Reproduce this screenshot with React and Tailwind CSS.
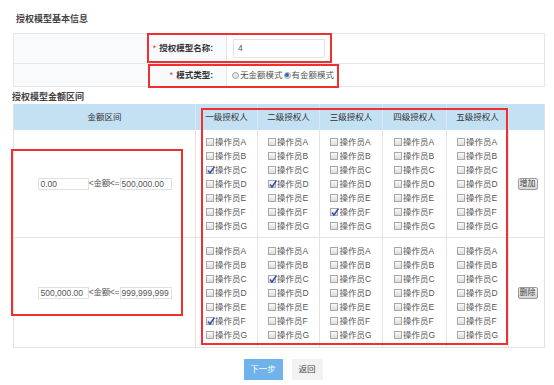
import React from "react";

// 授权人级别与操作员
const levels = ["一级授权人", "二级授权人", "三级授权人", "四级授权人", "五级授权人"];
const operators = ["A", "B", "C", "D", "E", "F", "G"];

// 每个区间中各级别已勾选的操作员
const ranges = [
  { from: "0.00", to: "500,000.00", action: "增加", checked: ["C", "D", "F", "", ""], h: "h-[108px]" },
  { from: "500,000.00", to: "999,999,999", action: "删除", checked: ["F", "C", "", "", ""], h: "h-[109px]" },
];

const Checkbox = ({ checked }) => (
  <span className="relative inline-block w-[8px] h-[8px] mr-[1px] border border-[#a8a8a8] bg-gradient-to-b from-[#fafafa] to-[#dcdcdc] align-[-1px]">
    {checked && (
      <svg viewBox="0 0 10 10" className="absolute -left-[1px] -top-[2px] w-[10px] h-[10px]">
        <path d="M2 5.5 L4 8 L8.5 1.5" fill="none" stroke="#2a4fb0" strokeWidth="1.4" />
      </svg>
    )}
  </span>
);

const Radio = ({ checked }) => (
  <span className="inline-flex items-center justify-center w-[7px] h-[7px] rounded-full border border-[#a0a0a0] bg-[#e8e8e8] mr-[1px]">
    {checked && <span className="w-[4px] h-[4px] rounded-full bg-[#1f6fc0]" />}
  </span>
);

const Mark = ({ className }) => (
  <div className={`absolute border-2 border-[#f03030] pointer-events-none ${className}`} />
);

export default function App() {
  return (
    <div className="relative w-[554px] h-[385px] bg-white text-[8.5px] text-[#333] font-['Liberation_Sans','Noto_Sans_CJK_SC',sans-serif] pl-[13px] pr-[9px] pt-[12px]">
      {/* 基本信息 */}
      <div className="h-[14px] leading-[14px] pl-[3px] font-bold text-[9px] text-[#444]">授权模型基本信息</div>
      <div className="mt-[7px] border border-[#e6e6e6]">
        <div className="flex h-[30px] border-b border-[#e6e6e6]">
          <div className="w-[213px] flex items-center justify-end pr-[13px] bg-[#f9fafc] border-r border-[#e6e6e6]">
            <span className="text-[#e83030] mr-[3px]">*</span>
            <span className="font-bold">授权模型名称:</span>
          </div>
          <div className="flex items-center pl-[6px]">
            <div className="w-[92px] h-[19px] border border-[#e3e3e3] pl-[4px] leading-[17px] text-[#555]">4</div>
          </div>
        </div>
        <div className="flex h-[22px]">
          <div className="w-[213px] flex items-center justify-end pr-[13px] bg-[#f9fafc] border-r border-[#e6e6e6]">
            <span className="text-[#e83030] mr-[3px]">*</span>
            <span className="font-bold">模式类型:</span>
          </div>
          <div className="flex items-center pl-[5px] text-[#555]">
            <Radio />
            <span className="mr-[1px]">无金额模式</span>
            <Radio checked />
            <span>有金额模式</span>
          </div>
        </div>
      </div>

      {/* 金额区间 */}
      <div className="mt-[4px] h-[13px] leading-[13px] -ml-[1px] font-bold text-[9px] text-[#444]">授权模型金额区间</div>
      <div className="border border-[#e3e3e3] border-t-0">
        <div className="grid grid-cols-[182px_62px_62px_63px_64px_62px_37px] h-[26px] bg-[#c4e1f4]">
          <div className="flex items-center justify-center border-r border-[#d8e9f5]">金额区间</div>
          {levels.map((l) => (
            <div key={l} className="flex items-center justify-center border-r border-[#d8e9f5]">{l}</div>
          ))}
          <div />
        </div>
        {ranges.map((r, ri) => (
          <div
            key={ri}
            className={`grid grid-cols-[182px_62px_62px_63px_64px_62px_37px] ${r.h} ${ri === 0 ? "border-b border-[#e3e3e3]" : ""}`}
          >
            <div className="flex items-center justify-center border-r border-[#e3e3e3] text-[#555]">
              <div className="shrink-0 w-[51px] h-[12px] border border-[#e0e0e0] pl-[2px] leading-[10px]">{r.from}</div>
              <span className="shrink-0 w-[31px] text-center whitespace-nowrap tracking-[-0.3px]">&lt;金额&lt;=</span>
              <div className="shrink-0 w-[52px] h-[12px] border border-[#e0e0e0] pl-[1px] leading-[10px] whitespace-nowrap overflow-hidden">{r.to}</div>
            </div>
            {levels.map((l, li) => (
              <div key={l} className="flex flex-col items-center justify-center border-r border-[#e3e3e3] text-[#555]">
                <div className="flex flex-col">
                  {operators.map((o) => (
                    <div key={o} className="h-[14px] leading-[14px] whitespace-nowrap">
                      <Checkbox checked={r.checked[li] === o} />
                      操作员{o}
                    </div>
                  ))}
                </div>
              </div>
            ))}
            <div className="flex items-center justify-center">
              <button className="w-[20px] h-[12px] leading-[10px] text-[8px] text-[#444] border border-[#9a9a9a] rounded-[2px] bg-gradient-to-b from-[#f4f4f4] to-[#d6d6d6]">
                {r.action}
              </button>
            </div>
          </div>
        ))}
      </div>

      <div className="mt-[11px] flex justify-center gap-[9px] pl-[8px]">
        <button className="w-[39px] h-[21px] bg-[#6fb3ea] text-white">下一步</button>
        <button className="w-[31px] h-[21px] bg-[#f2f2f2] text-[#444]">返回</button>
      </div>

      {/* 标注框 */}
      <Mark className="left-[147px] top-[33px] w-[185px] h-[30px]" />
      <Mark className="left-[148px] top-[64px] w-[191px] h-[24px]" />
      <Mark className="left-[11px] top-[149px] w-[172px] h-[167px]" />
      <Mark className="left-[201px] top-[108px] w-[307px] h-[237px]" />
    </div>
  );
}
